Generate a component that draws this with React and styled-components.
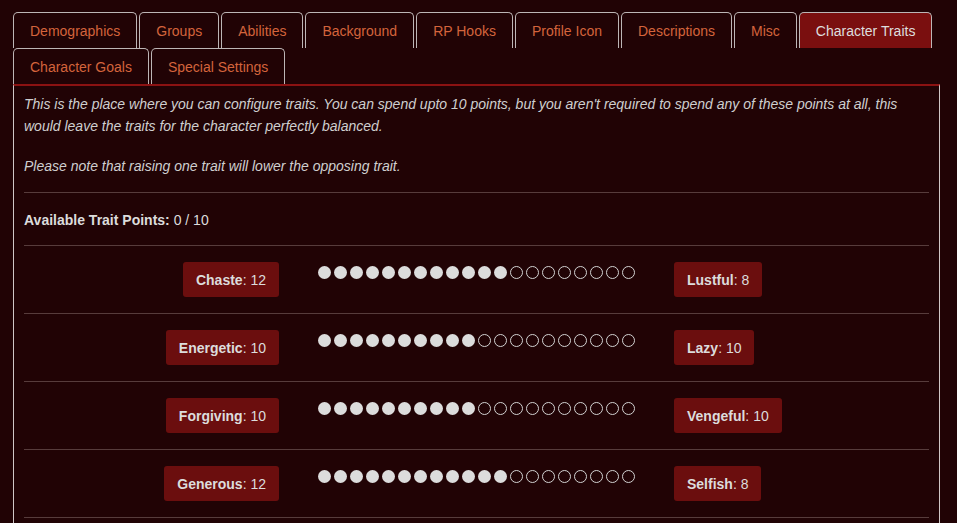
import React from 'react'
import styled, { createGlobalStyle } from 'styled-components'

const GlobalStyle = createGlobalStyle`
  html, body {
    margin: 0;
    background: #210305;
    font-family: "Liberation Sans", Arial, sans-serif;
    font-size: 14px;
    color: #d4d4d4;
  }
`

const Page = styled.div`
  padding: 12px 17px 0 13px;
`
const TabBar = styled.div`
  display: flex;
  flex-wrap: wrap;
  column-gap: 2px;
`
const Tab = styled.div`
  height: 36px;
  box-sizing: border-box;
  padding: 0 16px;
  display: flex;
  align-items: center;
  border: 1px solid #bdb6b6;
  border-bottom: none;
  border-radius: 5px 5px 0 0;
  font-size: 14px;
  color: ${props => (props.active ? '#dedede' : '#d4643c')};
  background: ${props => (props.active ? '#7a0f0f' : 'transparent')};
  white-space: nowrap;
`
const Panel = styled.div`
  border-top: 2px solid #8b1212;
  border-left: 1px solid #cfc6c6;
  border-right: 1px solid #cfc6c6;
  padding: 7px 10px 0;
`
const Intro = styled.p`
  margin: 0 0 18px;
  font-style: italic;
  line-height: 22px;
  color: #cfcfcf;

  &:last-of-type {
    margin-bottom: 15px;
  }
`
const Section = styled.div`
  border-top: 1px solid #573c3c;
  padding: 16px 0 14px;
  line-height: 22px;
  color: #dcdcdc;
`
const Row = styled.div`
  display: grid;
  grid-template-columns: 1fr 317px 1fr;
  column-gap: 39px;
  align-items: start;
  border-top: 1px solid #573c3c;
  padding: 16px 0;
`
const Badge = styled.div`
  justify-self: ${props => (props.side === 'left' ? 'end' : 'start')};
  height: 35px;
  box-sizing: border-box;
  display: flex;
  align-items: center;
  padding: 0 13px;
  border-radius: 3px;
  background: #6b0e0e;
  color: #dcdcdc;
  font-size: 14px;
  white-space: nowrap;
`
const Dots = styled.div`
  display: flex;
  gap: 3px;
  margin-top: 4px;
`
const Dot = styled.span`
  width: 13px;
  height: 13px;
  box-sizing: border-box;
  border-radius: 50%;
  background: ${props => (props.filled ? '#dcdcdc' : 'transparent')};
  border: ${props => (props.filled ? 'none' : '1.5px solid #d2d2d2')};
`

const tabs = [
  'Demographics',
  'Groups',
  'Abilities',
  'Background',
  'RP Hooks',
  'Profile Icon',
  'Descriptions',
  'Misc',
  'Character Traits',
  'Character Goals',
  'Special Settings',
]

const traits = [
  { left: 'Chaste', leftVal: 12, right: 'Lustful', rightVal: 8 },
  { left: 'Energetic', leftVal: 10, right: 'Lazy', rightVal: 10 },
  { left: 'Forgiving', leftVal: 10, right: 'Vengeful', rightVal: 10 },
  { left: 'Generous', leftVal: 12, right: 'Selfish', rightVal: 8 },
]

const TraitRow = ({ trait }) => (
  <Row>
    <Badge side="left">
      <b>{trait.left}</b>: {trait.leftVal}
    </Badge>
    <Dots>
      {Array.from({ length: 20 }, (_, i) => (
        <Dot key={i} filled={i < trait.leftVal ? 1 : 0} />
      ))}
    </Dots>
    <Badge side="right">
      <b>{trait.right}</b>: {trait.rightVal}
    </Badge>
  </Row>
)

const App = () => (
  <Page>
    <GlobalStyle />
    <TabBar>
      {tabs.map(t => (
        <Tab key={t} active={t === 'Character Traits' ? 1 : 0}>
          {t}
        </Tab>
      ))}
    </TabBar>
    <Panel>
      <Intro>
        This is the place where you can configure traits. You can spend upto 10
        points, but you aren't required to spend any of these points at all,
        this would leave the traits for the character perfectly balanced.
      </Intro>
      <Intro>Please note that raising one trait will lower the opposing trait.</Intro>
      <Section>
        <b>Available Trait Points:</b> 0 / 10
      </Section>
      {traits.map(t => (
        <TraitRow key={t.left} trait={t} />
      ))}
      <Section />
    </Panel>
  </Page>
)

export default App
